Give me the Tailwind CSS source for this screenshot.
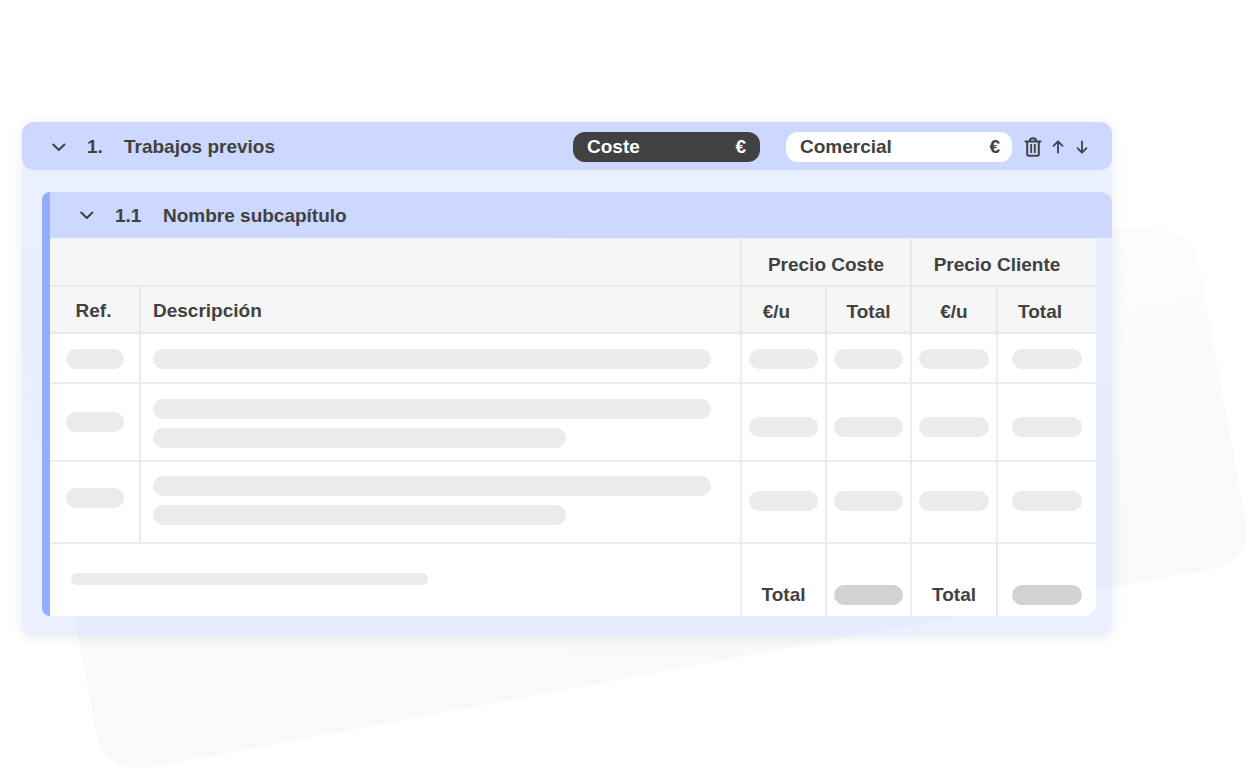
<!DOCTYPE html>
<html lang="es">
<head>
    <meta charset="UTF-8">
    <meta name="viewport" content="width=device-width, initial-scale=1.0">
    <title>Presupuesto | Trabajos previos</title>
    <script src="https://cdn.jsdelivr.net/npm/@tailwindcss/browser@4"></script>
</head>
<body class="relative min-h-screen overflow-x-hidden bg-white font-['Liberation_Sans',Arial,sans-serif] text-[19px] leading-6 font-bold text-[#414141]">

    <!-- Tilted backdrop -->
    <svg class="absolute top-0 left-0 w-full" viewBox="0 0 1255 776" fill="none" aria-hidden="true">
        <defs>
            <linearGradient id="backdrop" gradientUnits="userSpaceOnUse" x1="600" y1="200" x2="680" y2="640">
                <stop offset="0" stop-color="#fdfdfd"/>
                <stop offset="1" stop-color="#f9f9f9"/>
            </linearGradient>
        </defs>
        <path d="M1100 227 L1160 230 C1180 231 1194 243 1199 264 L1246 522 C1250 545 1239 562 1217 568 L146 768 C120 772 103 759 97 736 L22 345 V250 Z" fill="url(#backdrop)"/>
    </svg>

    <main class="relative pt-[122px] pr-[143px] pl-[22px]">
        <section class="rounded-xl bg-[#b8ccff]/30 pb-5 shadow-[0_2px_14px_rgba(0,0,0,0.08)]">

            <!-- Chapter header -->
            <header class="flex h-12 items-center rounded-xl bg-[#ccd8ff] pt-px pr-[22px] pl-[29px]">
                <button type="button" aria-label="Contraer capítulo" class="mr-5">
                    <svg class="size-4" viewBox="0 0 16 16" fill="none" stroke="#3d4347" stroke-width="2" stroke-linecap="round" stroke-linejoin="round"><path d="M2.200 5.500 7.800 11l5.600-5.500"/></svg>
                </button>
                <span class="w-9">1.</span>
                <h1 class="grow pl-[1px]">Trabajos previos</h1>
                <button type="button" class="mr-[26px] flex h-[30px] w-[187px] items-center justify-between rounded-xl bg-[#414141] pr-[14px] pl-[14px] text-white">
                    <span>Coste</span><span>€</span>
                </button>
                <button type="button" class="mr-3 flex h-[30px] w-[226px] items-center justify-between rounded-xl bg-white pr-3 pl-[14px]">
                    <span>Comercial</span><span>€</span>
                </button>
                <div class="flex items-center gap-2">
                    <button type="button" aria-label="Eliminar">
                        <svg class="h-5 w-[18px]" viewBox="0 0 18 20" fill="none" stroke="#3d4347" stroke-width="2" stroke-linejoin="round"><path stroke-linecap="round" d="M1.500 4.500h15"/><path d="M3.200 4.500v13c0 .8.400 1.200 1.200 1.200h9.200c.8 0 1.200-.4 1.200-1.200v-13M5.800 4.500C5.800 2.300 7 1.300 9 1.300s3.200 1 3.200 3.200"/><path stroke-width="1.800" d="M7.200 7v9M10.800 7v9"/></svg>
                    </button>
                    <button type="button" aria-label="Subir">
                        <svg class="size-4" viewBox="0 0 16 16" fill="none" stroke="#3d4347" stroke-width="1.800" stroke-linecap="round" stroke-linejoin="round"><path d="M8 13.700V2.300M3.500 6.800 8 2.300l4.500 4.500"/></svg>
                    </button>
                    <button type="button" aria-label="Bajar">
                        <svg class="size-4" viewBox="0 0 16 16" fill="none" stroke="#3d4347" stroke-width="1.800" stroke-linecap="round" stroke-linejoin="round"><path d="M8 2.300v11.400M3.500 9.200 8 13.700l4.500-4.500"/></svg>
                    </button>
                </div>
            </header>

            <!-- Subchapter -->
            <section class="mt-[22px] ml-5 flex">
                <div class="w-2 shrink-0 rounded-l-lg bg-[#95adff]"></div>
                <div class="grow">
                    <header class="flex h-[46px] items-center rounded-tr-xl bg-[#ccd8ff] pt-px pl-[29px]">
                        <button type="button" aria-label="Contraer subcapítulo" class="mr-5">
                            <svg class="size-4" viewBox="0 0 16 16" fill="none" stroke="#3d4347" stroke-width="2" stroke-linecap="round" stroke-linejoin="round"><path d="M2.200 4.500 7.800 10 13.400 4.500"/></svg>
                        </button>
                        <span class="w-12">1.1</span>
                        <h2>Nombre subcapítulo</h2>
                    </header>

                    <div class="mt-px mr-4 overflow-hidden rounded-br-xl bg-white">
                        <table class="w-full table-fixed border-separate border-spacing-0 [&_td]:border-[#ececec] [&_td]:p-0 [&_th]:border-[#e9e9e9] [&_th]:p-0">
                            <colgroup>
                                <col class="w-[91px]">
                                <col>
                                <col class="w-[85px]">
                                <col class="w-[85px]">
                                <col class="w-[86px]">
                                <col class="w-[98px]">
                            </colgroup>
                            <thead class="bg-[#f6f6f6]">
                                <tr class="h-12">
                                    <td colspan="2" class="border-r-2 border-b-2"></td>
                                    <th colspan="2" scope="colgroup" class="border-r-2 border-b-2"><div class="pt-[6px]">Precio Coste</div></th>
                                    <th colspan="2" scope="colgroup" class="border-b-2"><div class="pt-[6px] pr-[14px]">Precio Cliente</div></th>
                                </tr>
                                <tr class="h-[47px]">
                                    <th scope="col" class="border-r-2 border-b-2"><div class="pt-[2px] pr-[2px]">Ref.</div></th>
                                    <th scope="col" class="border-r-2 border-b-2 text-left"><div class="pt-[2px] pl-3">Descripción</div></th>
                                    <th scope="col" class="border-r-2 border-b-2"><div class="pt-1 pr-[14px]">€/u</div></th>
                                    <th scope="col" class="border-r-2 border-b-2"><div class="pt-1">Total</div></th>
                                    <th scope="col" class="border-r-2 border-b-2"><div class="pt-1">€/u</div></th>
                                    <th scope="col" class="border-b-2"><div class="pt-1 pr-[14px]">Total</div></th>
                                </tr>
                            </thead>
                            <tbody>
                                <tr class="h-[50px]">
                                    <td class="border-r-2 border-b-2"><div class="mt-[2px] ml-4 h-5 w-[58px] rounded-full bg-[#ebebeb]"></div></td>
                                    <td class="border-r-2 border-b-2"><div class="mt-[2px] mr-[29px] ml-3 h-5 rounded-full bg-[#ebebeb]"></div></td>
                                    <td class="border-r-2 border-b-2"><div class="mx-[7px] mt-[2px] h-5 rounded-full bg-[#ebebeb]"></div></td>
                                    <td class="border-r-2 border-b-2"><div class="mx-[7px] mt-[2px] h-5 rounded-full bg-[#ebebeb]"></div></td>
                                    <td class="border-r-2 border-b-2"><div class="mx-[7px] mt-[2px] h-5 rounded-full bg-[#ebebeb]"></div></td>
                                    <td class="border-b-2"><div class="mx-[14px] mt-[2px] h-5 rounded-full bg-[#ebebeb]"></div></td>
                                </tr>
                                <tr class="h-[78px]">
                                    <td class="border-r-2 border-b-2"><div class="ml-4 h-5 w-[58px] rounded-full bg-[#ebebeb]"></div></td>
                                    <td class="border-r-2 border-b-2">
                                        <div class="mt-[2px] mr-[29px] ml-3 grid gap-[9px]">
                                            <div class="h-5 rounded-full bg-[#ebebeb]"></div>
                                            <div class="h-5 w-[74%] rounded-full bg-[#ebebeb]"></div>
                                        </div>
                                    </td>
                                    <td class="border-r-2 border-b-2"><div class="mx-[7px] mt-[10px] h-5 rounded-full bg-[#ebebeb]"></div></td>
                                    <td class="border-r-2 border-b-2"><div class="mx-[7px] mt-[10px] h-5 rounded-full bg-[#ebebeb]"></div></td>
                                    <td class="border-r-2 border-b-2"><div class="mx-[7px] mt-[10px] h-5 rounded-full bg-[#ebebeb]"></div></td>
                                    <td class="border-b-2"><div class="mx-[14px] mt-[10px] h-5 rounded-full bg-[#ebebeb]"></div></td>
                                </tr>
                                <tr class="h-[82px]">
                                    <td class="border-r-2 border-b-2"><div class="mb-2 ml-4 h-5 w-[58px] rounded-full bg-[#ebebeb]"></div></td>
                                    <td class="border-r-2 border-b-2">
                                        <div class="mr-[29px] mb-1 ml-3 grid gap-[9px]">
                                            <div class="h-5 rounded-full bg-[#ebebeb]"></div>
                                            <div class="h-5 w-[74%] rounded-full bg-[#ebebeb]"></div>
                                        </div>
                                    </td>
                                    <td class="border-r-2 border-b-2"><div class="mx-[7px] mb-[2px] h-5 rounded-full bg-[#ebebeb]"></div></td>
                                    <td class="border-r-2 border-b-2"><div class="mx-[7px] mb-[2px] h-5 rounded-full bg-[#ebebeb]"></div></td>
                                    <td class="border-r-2 border-b-2"><div class="mx-[7px] mb-[2px] h-5 rounded-full bg-[#ebebeb]"></div></td>
                                    <td class="border-b-2"><div class="mx-[14px] mb-[2px] h-5 rounded-full bg-[#ebebeb]"></div></td>
                                </tr>
                            </tbody>
                            <tfoot>
                                <tr class="h-[72px]">
                                    <td colspan="2" class="border-r-2"><div class="mb-[2px] ml-[21px] h-3 w-[357px] rounded-full bg-[#ebebeb]"></div></td>
                                    <th scope="row" class="border-r-2"><div class="pt-[30px]">Total</div></th>
                                    <td class="border-r-2"><div class="mx-[7px] mt-[30px] h-5 rounded-full bg-[#d2d2d2]"></div></td>
                                    <th scope="row" class="border-r-2"><div class="pt-[30px]">Total</div></th>
                                    <td><div class="mx-[14px] mt-[30px] h-5 rounded-full bg-[#d2d2d2]"></div></td>
                                </tr>
                            </tfoot>
                        </table>
                    </div>
                </div>
            </section>
        </section>
    </main>
</body>
</html>
